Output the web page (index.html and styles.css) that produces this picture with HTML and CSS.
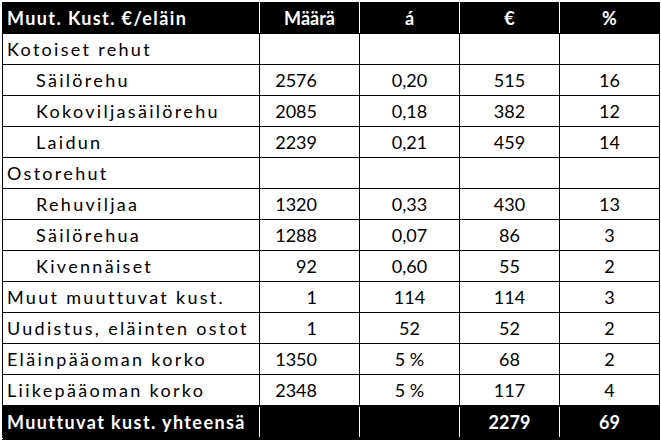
FILE: index.html
```html
<!DOCTYPE html>
<html lang="fi">
<head>
<meta charset="utf-8">
<link rel="stylesheet" href="styles.css">
</head>
<body>
<table class="costs">
  <colgroup>
    <col class="c-name"><col class="c-num"><col class="c-num"><col class="c-num"><col class="c-num">
  </colgroup>
  <thead>
    <tr class="dark">
      <th class="name">Muut. Kust. €/eläin</th><th>Määrä</th><th>á</th><th>€</th><th>%</th>
    </tr>
  </thead>
  <tbody>
    <tr><td class="name">Kotoiset rehut</td><td></td><td></td><td></td><td></td></tr>
    <tr><td class="name sub">Säilörehu</td><td class="r">2576</td><td>0,20</td><td>515</td><td>16</td></tr>
    <tr><td class="name sub">Kokoviljasäilörehu</td><td class="r">2085</td><td>0,18</td><td>382</td><td>12</td></tr>
    <tr><td class="name sub">Laidun</td><td class="r">2239</td><td>0,21</td><td>459</td><td>14</td></tr>
    <tr><td class="name">Ostorehut</td><td></td><td></td><td></td><td></td></tr>
    <tr><td class="name sub">Rehuviljaa</td><td class="r">1320</td><td>0,33</td><td>430</td><td>13</td></tr>
    <tr><td class="name sub">Säilörehua</td><td class="r">1288</td><td>0,07</td><td>86</td><td>3</td></tr>
    <tr><td class="name sub">Kivennäiset</td><td class="r">92</td><td>0,60</td><td>55</td><td>2</td></tr>
    <tr><td class="name">Muut muuttuvat kust.</td><td class="r">1</td><td>114</td><td>114</td><td>3</td></tr>
    <tr><td class="name">Uudistus, eläinten ostot</td><td class="r">1</td><td>52</td><td>52</td><td>2</td></tr>
    <tr><td class="name">Eläinpääoman korko</td><td class="r">1350</td><td>5 %</td><td>68</td><td>2</td></tr>
    <tr><td class="name">Liikepääoman korko</td><td class="r">2348</td><td>5 %</td><td>117</td><td>4</td></tr>
  </tbody>
  <tfoot>
    <tr class="dark total">
      <th class="name">Muuttuvat kust. yhteensä</th><th></th><th></th><th>2279</th><th>69</th>
    </tr>
  </tfoot>
</table>
</body>
</html>
```

FILE: styles.css
```css
html, body {
  margin: 0;
  padding: 0;
  background: #ffffff;
}

body {
  padding: 2px 0 0 2px;
}

.costs {
  border-collapse: collapse;
  table-layout: fixed;
  width: 657px;
  height: 438px;
  font-family: Lato, "Liberation Sans", sans-serif;
  font-size: 18px;
  color: #000;
  border: 1px solid #000;
}

.c-name { width: 257px; }
.c-num { width: 100px; }

.costs td,
.costs th {
  height: 30px;
  padding: 0;
  border: 1px solid #000;
  text-align: center;
  vertical-align: middle;
  white-space: nowrap;
  font-weight: normal;
  line-height: 1;
  letter-spacing: 0;
}

.costs .name {
  text-align: left;
  padding-left: 4px;
  letter-spacing: 2.3px;
}

.costs .sub {
  padding-left: 33px;
}

.costs .r {
  text-align: right;
  padding-right: 42px;
}

.dark th {
  background: #000;
  color: #fff;
  font-weight: bold;
  border-top-color: #000;
  border-bottom-color: #000;
  border-left-color: #fff;
  border-right-color: #fff;
}

.dark th.name {
  letter-spacing: 1.4px;
}

.dark th:first-child {
  border-left-color: #000;
}

.dark th:last-child {
  border-right-color: #000;
}

.total th {
  border-top: 2px solid #000;
  border-bottom: 3px double #000;
}
```
